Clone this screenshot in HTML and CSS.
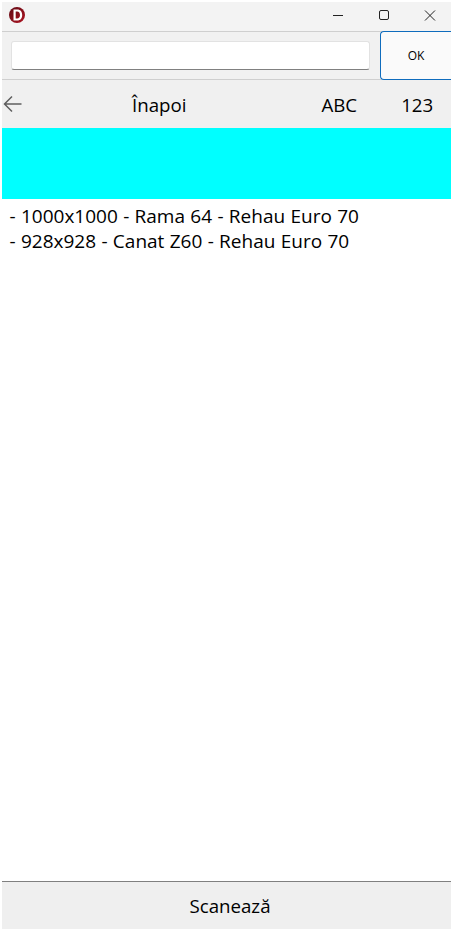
FILE: index.html
```html
<!DOCTYPE html>
<html lang="en">
<head>
    <meta charset="UTF-8">
    <meta name="viewport" content="width=device-width, initial-scale=1.0">
    <title>Scanare</title>
    <link rel="stylesheet" href="styles.css">
</head>
<body>
    <div class="window">
        <div class="titlebar">
            <svg class="appIcon" width="18" height="18" viewBox="0 0 18 18">
                <defs>
                    <linearGradient id="iconRed" x1="0" y1="0" x2="1" y2="1">
                        <stop offset="0" stop-color="#5e0a14"/>
                        <stop offset="1" stop-color="#b01522"/>
                    </linearGradient>
                </defs>
                <circle cx="9" cy="9" r="8" fill="url(#iconRed)"/>
                <path d="M5.5 3.5h3.7c3.2 0 5 2.2 5 5.5s-1.8 5.5-5 5.5H5.5zM7.7 5.4v7.2h1.4c1.9 0 2.9-1.5 2.9-3.6s-1-3.6-2.9-3.6z" fill="#fff" fill-rule="evenodd"/>
            </svg>
            <div class="windowButtons">
                <svg width="46" height="29" viewBox="0 0 46 29"><path d="M20 13.5h10" stroke="#222" stroke-width="1"/></svg>
                <svg width="46" height="29" viewBox="0 0 46 29"><rect x="20.5" y="8.5" width="9" height="9" rx="1.5" fill="none" stroke="#222"/></svg>
                <svg width="46" height="29" viewBox="0 0 46 29"><path d="M20 8.5l10 10M30 8.5l-10 10" stroke="#222" stroke-width="1"/></svg>
            </div>
        </div>

        <div class="searchRow">
            <input type="text" class="searchInput">
            <button class="okButton">OK</button>
        </div>

        <div class="navBar">
            <svg class="backIcon" width="19" height="18" viewBox="0 0 19 18">
                <path d="M18.5 9H1.5M9 1.5L1.5 9 9 16.5" fill="none" stroke="#5f5f5f" stroke-width="1.5"/>
            </svg>
            <span class="navItem navBack">Înapoi</span>
            <span class="navItem navAbc">ABC</span>
            <span class="navItem navNum">123</span>
        </div>

        <div class="banner"></div>

        <div class="itemList">
            <div class="item">- 1000x1000 - Rama 64 - Rehau Euro 70</div>
            <div class="item">- 928x928 - Canat Z60 - Rehau Euro 70</div>
        </div>

        <button class="scanButton">Scanează</button>
    </div>
</body>
</html>
```

FILE: styles.css
```css
html, body {
    height: 100%;
}

body {
    font-family: "Open Sans", "Noto Sans", sans-serif;
    margin: 0;
    padding: 2px;
    box-sizing: border-box;
    background-color: white;
    color: #000;
}

.window {
    display: flex;
    flex-direction: column;
    height: 100%;
    background: white;
}

.titlebar {
    display: flex;
    justify-content: space-between;
    align-items: center;
    height: 29px;
    flex-shrink: 0;
    padding-left: 6px;
    background-color: #f3f3f3;
    border-bottom: 1px solid #cfcfcf;
}

.appIcon {
    display: block;
    margin-bottom: 3px;
}

.windowButtons {
    display: flex;
}

.windowButtons svg {
    display: block;
}

.searchRow {
    display: flex;
    align-items: center;
    justify-content: space-between;
    height: 47px;
    flex-shrink: 0;
    padding-left: 9px;
    background-color: #f1f1f1;
    border-bottom: 1px solid #cfcfcf;
}

.searchInput {
    width: 359px;
    height: 29px;
    padding: 0 6px;
    box-sizing: border-box;
    border: 1px solid #e2e2e2;
    border-bottom: 1px solid #808080;
    border-radius: 3px;
    background: white;
}

.okButton {
    width: 71px;
    height: 49px;
    box-sizing: border-box;
    border: 1px solid #0f6cbd;
    border-right: none;
    border-radius: 4px 0 0 4px;
    background: #fafafa;
    color: #000;
    font-family: "Open Sans", sans-serif;
    font-size: 12px;
}

.navBar {
    display: flex;
    align-items: center;
    height: 48px;
    flex-shrink: 0;
    background-color: #f0f0f0;
    font-size: 18.7px;
}

.backIcon {
    display: block;
    margin-left: 1px;
}

.navItem {
    white-space: nowrap;
}

.navBack {
    margin-left: 110px;
}

.navAbc {
    margin-left: 135px;
}

.navNum {
    margin-left: 44px;
}

.banner {
    height: 71px;
    flex-shrink: 0;
    background-color: #00ffff;
}

.itemList {
    flex: 1;
    padding: 5px 0 0 7.5px;
    font-size: 19px;
    line-height: 25px;
    word-spacing: 0.4px;
}

.scanButton {
    height: 48px;
    flex-shrink: 0;
    padding-left: 13px;
    border: none;
    border-top: 1px solid #808080;
    background-color: #efefef;
    color: #000;
    font-family: "Open Sans", sans-serif;
    font-size: 18.7px;
}
```
